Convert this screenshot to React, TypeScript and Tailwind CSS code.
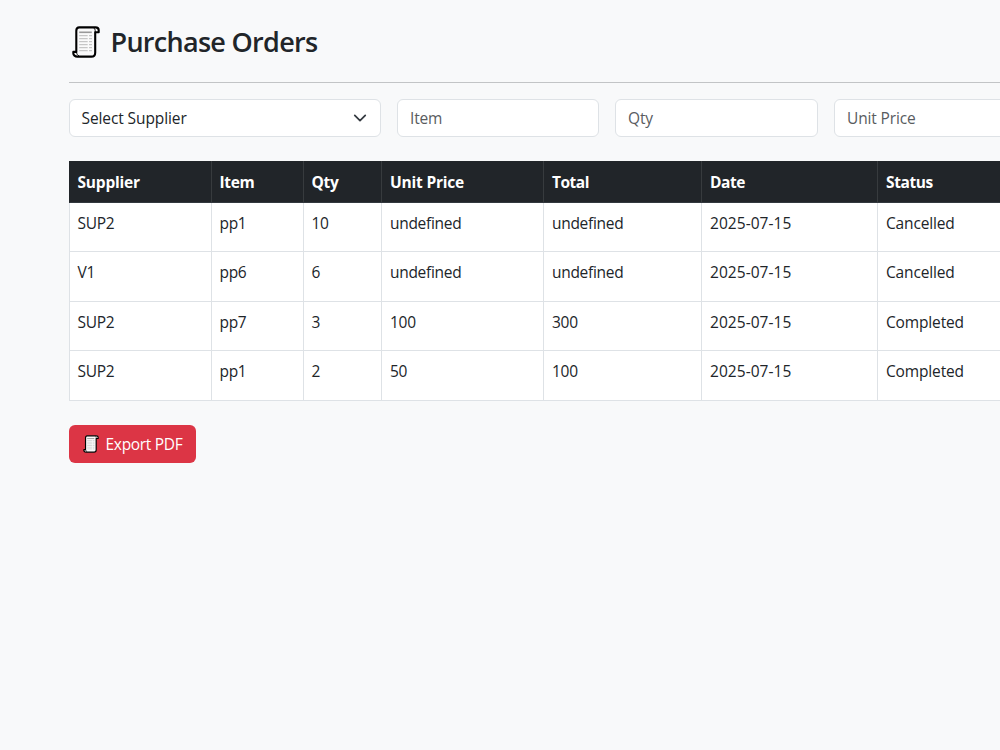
import { clsx } from "clsx";

interface Order {
  supplier: string;
  item: string;
  qty: number;
  unitPrice: string;
  total: string;
  date: string;
  status: string;
}

const orders: Order[] = [
  { supplier: "SUP2", item: "pp1", qty: 10, unitPrice: "undefined", total: "undefined", date: "2025-07-15", status: "Cancelled" },
  { supplier: "V1", item: "pp6", qty: 6, unitPrice: "undefined", total: "undefined", date: "2025-07-15", status: "Cancelled" },
  { supplier: "SUP2", item: "pp7", qty: 3, unitPrice: "100", total: "300", date: "2025-07-15", status: "Completed" },
  { supplier: "SUP2", item: "pp1", qty: 2, unitPrice: "50", total: "100", date: "2025-07-15", status: "Completed" },
];

const columns = [
  { label: "Supplier", width: "w-[142px]", header: "px-[7.500px] tracking-[-0.2px]", cell: "px-[7.500px]" },
  { label: "Item", width: "w-[92px]", header: "px-[7.500px] tracking-[-0.3px]", cell: "px-[7.500px]" },
  { label: "Qty", width: "w-[78px]", header: "px-[7.500px] tracking-[-0.3px]", cell: "px-[7.500px]" },
  { label: "Unit Price", width: "w-[162px]", header: "px-2 tracking-[-0.2px]", cell: "px-2" },
  { label: "Total", width: "w-[158px]", header: "px-2 tracking-[-0.5px]", cell: "px-2" },
  { label: "Date", width: "w-[176px]", header: "px-2 tracking-[-0.4px]", cell: "px-2 tracking-[0.05px]" },
  { label: "Status", width: "w-[160px]", header: "px-2 tracking-[-0.4px]", cell: "px-2 tracking-[-0.15px]" },
];

function ScrollIcon({ className }: { className?: string }) {
  return (
    <svg className={className} viewBox="0 0 28 32" fill="none">
      <path
        d="M7.300 1.400h16.200c2 0 3.200 1.200 3.200 2.800v2h-3.500v20.500c0 2.300-1.500 3.900-3.900 3.900H5.400c-2.400 0-4.100-1.500-4.100-3.300v-1.400h3V4.700c0-2 1-3.300 3-3.300Z"
        fill="#fafafa"
        stroke="#000"
        strokeWidth="2.100"
        strokeLinejoin="round"
      />
      <path d="M23.200 6.200V4.500c0-1-.5-1.900-1.300-2.400M1.500 26h3c.2 1.900 1 3.300 2.600 4" stroke="#000" strokeWidth="1" />
      <path d="M7.200 6.300h12.600" stroke="#999" strokeWidth="1.600" />
      <path
        d="M7.200 9.700h8.500M17 9.700h3M7.200 12.700h8.500M17 12.700h3M7.200 15.700h8.500M17 15.700h3M7.200 18.700h8.500M17 18.700h3M7.200 21.700h8.500M17 21.700h3M7.200 24.700h8.500M17 24.700h3"
        stroke="#bbb"
        strokeWidth="1"
      />
    </svg>
  );
}

function Field({ placeholder, className }: { placeholder: string; className?: string }) {
  return (
    <input
      className={clsx(
        "h-[38px] shrink-0 rounded-md border border-[#dee2e6] bg-white pl-3 tracking-[-0.15px] placeholder:text-[#595c5f]",
        className,
      )}
      placeholder={placeholder}
    />
  );
}

export default function App() {
  return (
    <div className="h-[750px] w-full overflow-hidden bg-[#f8f9fa] pl-[69px] font-['Open_Sans',sans-serif] text-[15.500px] leading-6 tracking-[-0.3px] text-[#212529]">
      <header className="flex h-[83px] items-start border-b border-[#c2c4c6] pt-[25px]">
        <ScrollIcon className="mt-px ml-[3px] h-8 w-7 shrink-0" />
        <h2 className="ml-[10.500px] text-[27px] leading-[34px] font-semibold tracking-[-0.7px] whitespace-nowrap">
          Purchase Orders
        </h2>
      </header>

      <form className="mt-4 flex gap-4">
        <button
          type="button"
          className="flex h-[38px] w-[312px] shrink-0 items-center justify-between rounded-md border border-[#dee2e6] bg-white pr-[13px] pl-[11.500px]"
        >
          <span className="tracking-[-0.1px]">Select Supplier</span>
          <svg className="size-3.5" viewBox="0 0 16 16" fill="none">
            <path d="m2 5 6 6 6-6" stroke="#343a40" strokeWidth="2" strokeLinecap="round" strokeLinejoin="round" />
          </svg>
        </button>
        <Field placeholder="Item" className="w-[202px]" />
        <Field placeholder="Qty" className="w-[203px]" />
        <Field placeholder="Unit Price" className="w-[203px]" />
      </form>

      <table className="mt-6 w-[968px] table-fixed border-separate border-spacing-0 bg-white">
        <thead>
          <tr className="h-[42px] bg-[#212529] text-left text-white">
            {columns.map((column) => (
              <th
                key={column.label}
                className={clsx(
                  "border-b border-l border-b-[#32383e] border-l-[#373b3e] pt-px pb-0 font-bold first:border-l-[#212529]",
                  column.width,
                  column.header,
                )}
              >
                {column.label}
              </th>
            ))}
          </tr>
        </thead>
        <tbody>
          {orders.map((order, index) => (
            <tr key={index} className="h-[49px] even:h-[50px]">
              {Object.values(order).map((value, i) => (
                <td
                  key={i}
                  className={clsx("border-b border-l border-[#dee2e6] pt-2 pb-0 align-top", columns[i].cell)}
                >
                  {value}
                </td>
              ))}
            </tr>
          ))}
        </tbody>
      </table>

      <button
        type="button"
        className="mt-6 flex h-[38px] w-[127px] items-center rounded-md bg-[#dc3545] pl-[14px] text-white"
      >
        <ScrollIcon className="h-[18px] w-4 shrink-0" />
        <span className="ml-[6.500px] whitespace-nowrap">Export PDF</span>
      </button>
    </div>
  );
}
